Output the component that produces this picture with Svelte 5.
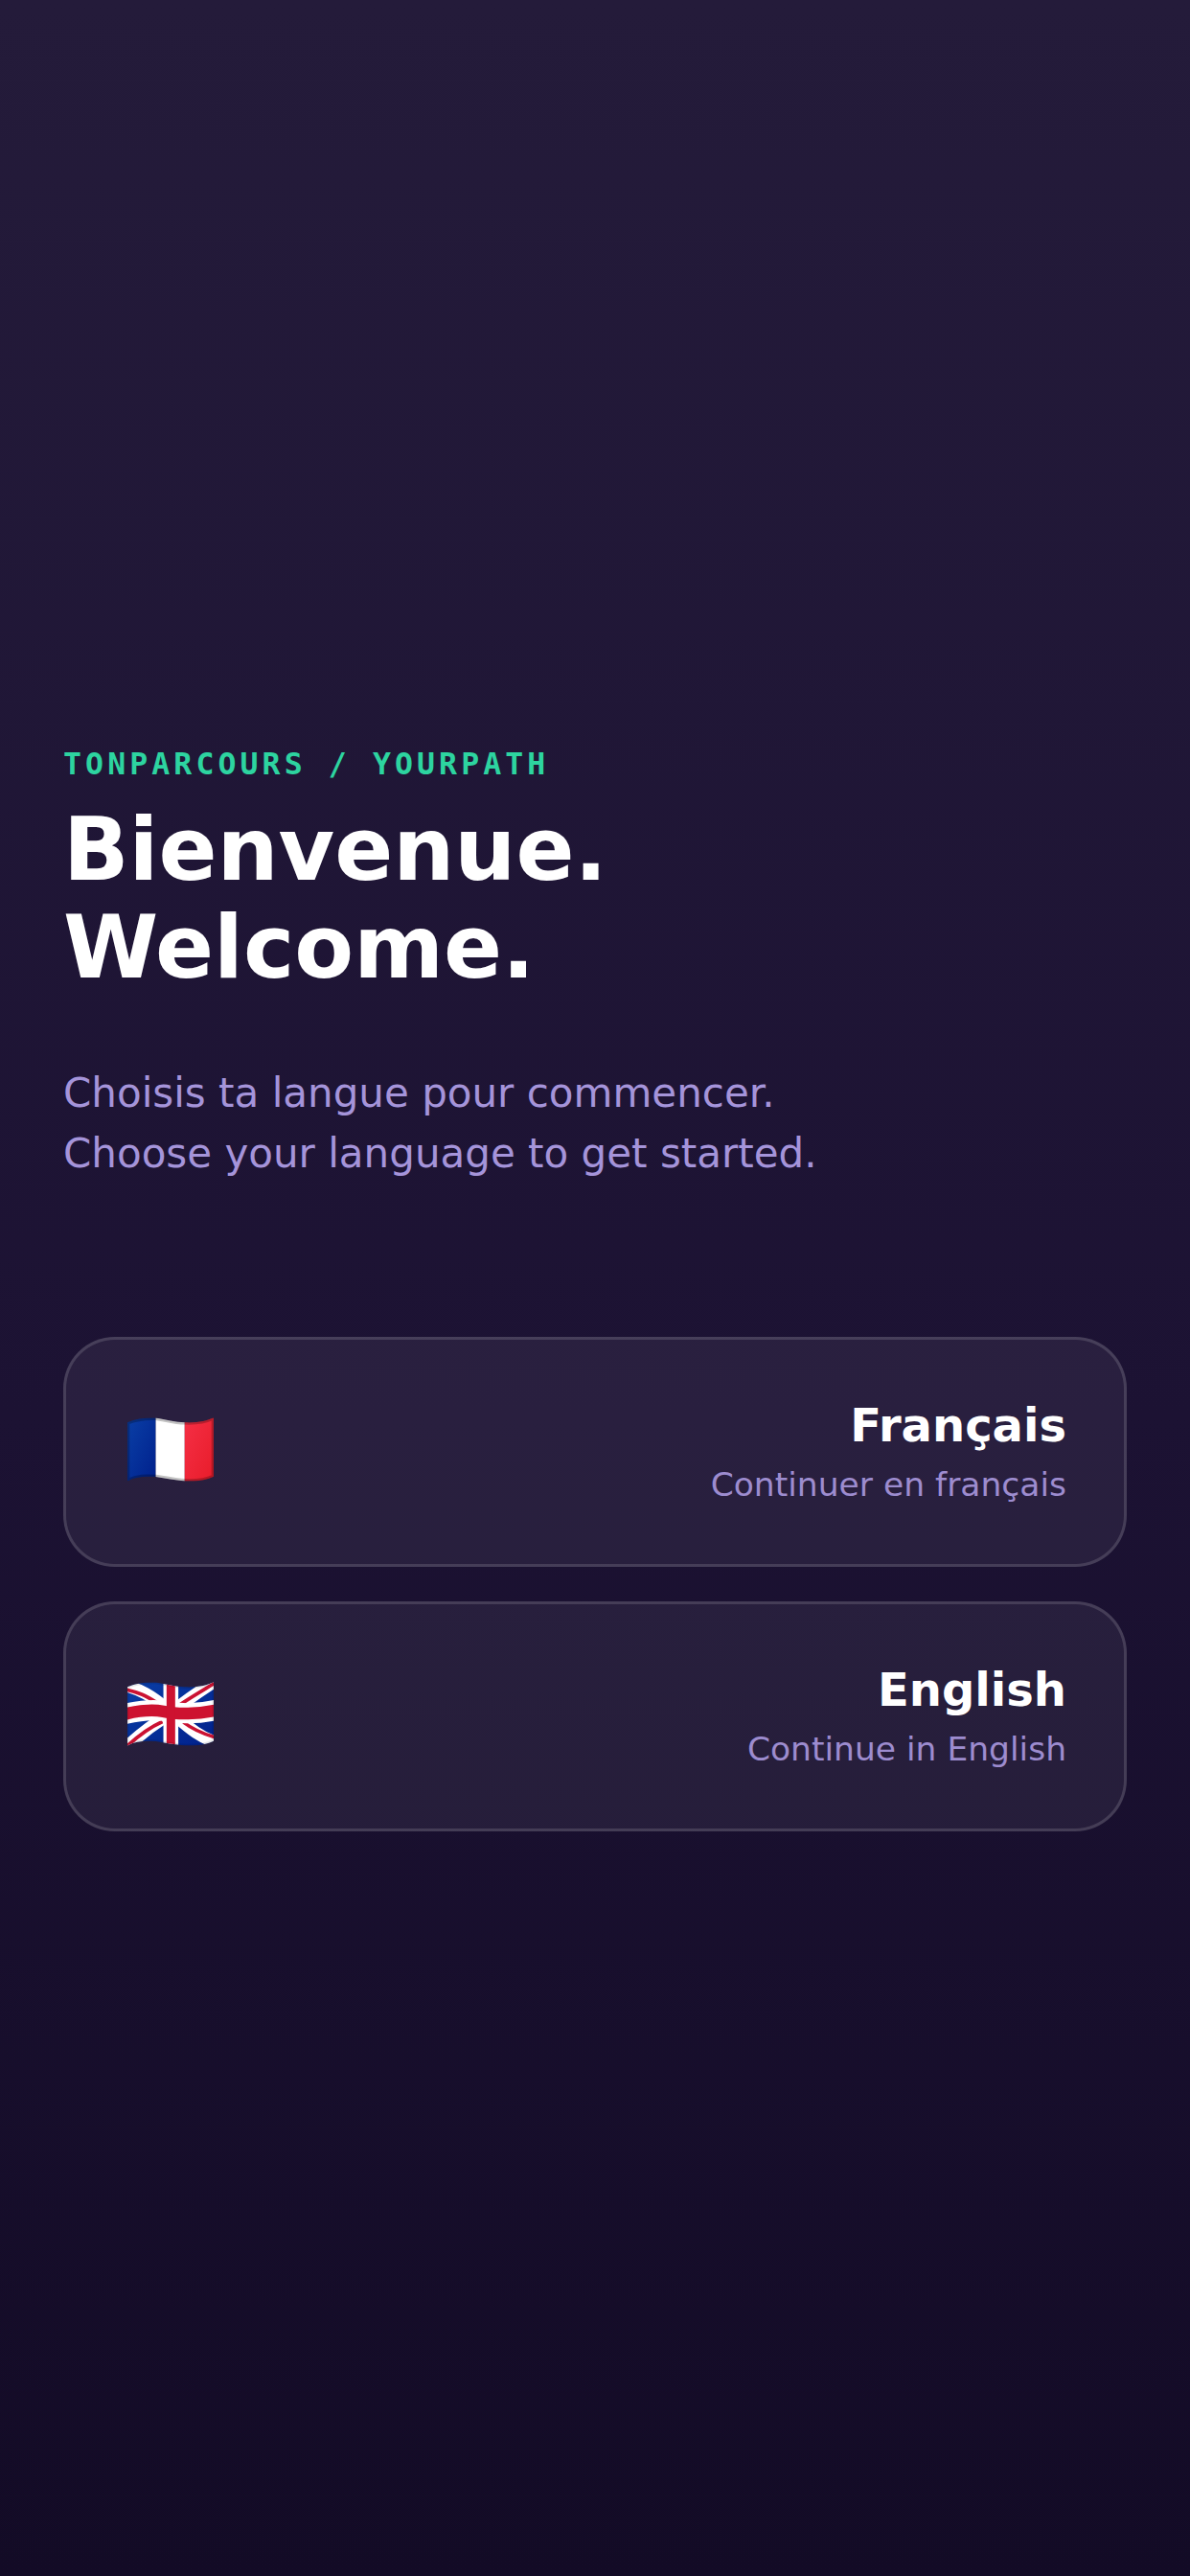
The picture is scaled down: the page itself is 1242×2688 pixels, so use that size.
<script>
  const wave = "M0 15C30 2 60 0 89 1C120 6 150 15 180 15C220 17 250 10 271 0L271 185C250 195 220 201 180 199C150 197 120 190 89 186C60 184 30 183 0 199Z";
  const options = [
    { id: 'fr', name: 'Français', sub: 'Continuer en français' },
    { id: 'en', name: 'English', sub: 'Continue in English' }
  ];
</script>

<main class="page">
  <section class="intro">
    <p class="eyebrow">TONPARCOURS / YOURPATH</p>
    <h1>Bienvenue.<br />Welcome.</h1>
    <p class="lead">Choisis ta langue pour commencer.<br />Choose your language to get started.</p>
  </section>
  <div class="choices">
    {#each options as o}
      <button class="card" type="button">
        <svg class="flag" viewBox="0 0 271 200" aria-hidden="true">
          <defs>
            <clipPath id={`clip-${o.id}`}><path d={wave} /></clipPath>
            <linearGradient id={`blue-${o.id}`} x1="0" y1="0" x2="1" y2="1"><stop offset="0" stop-color="#0a3fa6" /><stop offset="1" stop-color="#00208c" /></linearGradient>
            <linearGradient id={`red-${o.id}`} x1="0" y1="0" x2="1" y2="1"><stop offset="0" stop-color="#f52f45" /><stop offset="1" stop-color="#e81c2a" /></linearGradient>
          </defs>
          <g clip-path={`url(#clip-${o.id})`}>
            {#if o.id === 'fr'}
              <rect x="0" y="0" width="89" height="200" fill={`url(#blue-${o.id})`} />
              <rect x="89" y="0" width="91" height="200" fill="#fff" />
              <rect x="180" y="0" width="91" height="200" fill={`url(#red-${o.id})`} />
              <path d={wave} fill="none" stroke="#000" stroke-opacity="0.24" stroke-width="14" />
            {:else}
              <rect width="271" height="200" fill={`url(#blue-${o.id})`} />
              <path d="M-25 6C40 20 80 45 125 85M296 -16C230 25 195 50 150 85M-25 225C30 170 70 140 125 105M296 196C230 175 195 145 150 105" stroke="#fff" stroke-width="38" fill="none" />
              <path d="M-20 20C35 30 60 44 92 64M289 -6C230 30 195 50 165 71M-14 214C35 165 70 142 110 124M293 178C240 165 205 148 176 126" stroke="#cb1232" stroke-width="11" fill="none" />
              <path d="M-30 106C40 86 80 86 113 90C150 98 220 104 300 82" stroke="#fff" stroke-width="64" fill="none" />
              <rect x="113" y="0" width="47" height="200" fill="#fff" />
              <path d="M-30 106C40 86 80 86 113 92C150 100 220 104 300 83" stroke="#cd1230" stroke-width="38" fill="none" />
              <rect x="123" y="0" width="27" height="200" fill="#cd1230" />
              <path d={wave} fill="none" stroke="#000" stroke-opacity="0.1" stroke-width="10" />
            {/if}
          </g>
        </svg>
        <span class="label">
          <span class="name">{o.name}</span>
          <span class="sub">{o.sub}</span>
        </span>
      </button>
    {/each}
  </div>
</main>

<style>
  :global(body) { margin: 0; background: #130b26; }
  .page {
    box-sizing: border-box;
    min-height: 2688px;
    padding: 0 66px;
    display: flex;
    flex-direction: column;
    justify-content: center;
    background: linear-gradient(180deg, #241b3a 0%, #1c1233 55%, #130b26 100%);
    font-family: "DejaVu Sans", sans-serif;
  }
  .intro { margin-bottom: 160px; }
  .eyebrow {
    margin: 0 0 19px;
    font: bold 31.5px/40px "DejaVu Sans Mono", monospace;
    letter-spacing: 4.1px;
    color: #2dd4a0;
  }
  h1 {
    margin: 0 0 69px;
    font-size: 90px;
    line-height: 102px;
    font-weight: 700;
    color: #fff;
  }
  .lead {
    margin: 0;
    font-size: 42px;
    line-height: 63px;
    color: #a594da;
  }
  .choices { display: flex; flex-direction: column; gap: 36px; }
  .card {
    box-sizing: border-box;
    height: 240px;
    padding: 0 60px;
    display: flex;
    align-items: center;
    justify-content: space-between;
    background: rgba(255,255,255,0.06);
    border: 3px solid rgba(255,255,255,0.14);
    border-radius: 54px;
    font-family: inherit;
  }
  .flag { width: 90px; height: 67px; margin: 0 0 5px 4px; display: block; }
  .label { display: flex; flex-direction: column; align-items: flex-end; gap: 9px; }
  .name { font-size: 48px; line-height: 58px; font-weight: 700; color: #fff; }
  .sub { font-size: 34.5px; line-height: 48px; color: #9d8ccf; }
</style>
